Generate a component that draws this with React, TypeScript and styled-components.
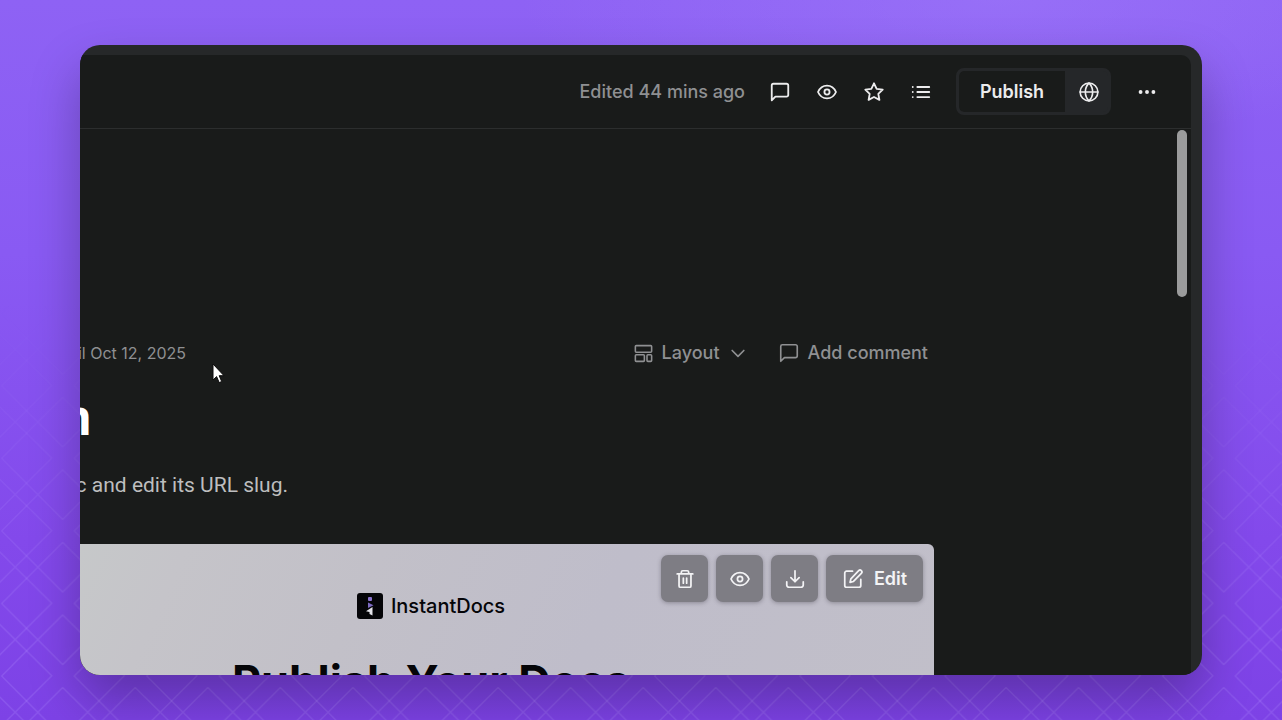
import type { ReactNode } from "react";
import styled, { createGlobalStyle } from "styled-components";

const GlobalStyle = createGlobalStyle`
  *, *::before, *::after { box-sizing: border-box; }
  html, body { margin: 0; padding: 0; }
  body { font-family: Inter, "Liberation Sans", sans-serif; }
  h1, h2, p { margin: 0; }
  button { font: inherit; color: inherit; background: none; border: 0; padding: 0; cursor: pointer; }
`;

const Stage = styled.main`
  position: relative;
  display: flex;
  height: 100vh;
  padding: 45px 80px;
  overflow: hidden;
  background:
    radial-gradient(ellipse 480px 140px at 78% 0, rgba(164, 130, 252, 0.4), transparent),
    linear-gradient(180deg, #8e62f4 0%, #895af3 35%, #8349eb 75%, #7d42e6 100%);
`;

const Lattice = styled.svg`
  position: absolute;
  inset: 0;
  width: 100%;
  height: 100%;
  mask-image: linear-gradient(180deg, transparent 42%, #000 88%);
`;

const Card = styled.section`
  position: relative;
  flex: 1;
  min-width: 0;
  display: flex;
  padding: 10px 11px 0 0;
  border-radius: 20px;
  overflow: hidden;
  background: #262829;
`;

const CardShadow = styled.div`
  position: relative;
  flex: 1;
  min-width: 0;
  display: flex;
  border-radius: 20px;
  box-shadow: 0 25px 50px rgba(0, 0, 0, 0.27);
`;

const Window = styled.div`
  flex: 1;
  min-width: 0;
  display: flex;
  flex-direction: column;
  border-top-right-radius: 10px;
  background: #191b1a;
`;

const Toolbar = styled.header`
  flex: none;
  display: flex;
  align-items: center;
  justify-content: flex-end;
  height: 74px;
  padding-right: 21px;
  border-bottom: 1px solid #2c2e2e;
  color: #ececed;
`;

const Edited = styled.span`
  margin-right: 11px;
  font-size: 18px;
  line-height: 24px;
  font-weight: 500;
  color: #8f9092;
`;

const ToolButton = styled.button`
  display: flex;
  align-items: center;
  justify-content: center;
  width: 47px;
  height: 47px;
`;

const PublishGroup = styled.div`
  display: flex;
  height: 47px;
  margin: 0 12px;
  border: 3px solid #252729;
  border-radius: 8px;
  background: #252729;
  overflow: hidden;
`;

const PublishButton = styled.button`
  width: 106px;
  border-radius: 5px 0 0 5px;
  background: #191b1a;
  font-size: 18px;
  line-height: 24px;
  font-weight: 600;
`;

const GlobeButton = styled.button`
  display: flex;
  align-items: center;
  justify-content: center;
  width: 43px;
  padding-left: 4px;
`;

const Scroller = styled.div`
  position: relative;
  flex: 1;
  min-height: 0;
  display: flex;
  justify-content: flex-end;
  padding-right: 257px;
  overflow: hidden;
`;

const ScrollThumb = styled.div`
  position: absolute;
  top: 1px;
  right: 4px;
  width: 10px;
  height: 167px;
  border-radius: 5px;
  background: #9b9c9c;
`;

const Column = styled.article`
  flex: none;
  display: flex;
  flex-direction: column;
  width: 1006px;
  padding-top: 212px;
`;

const MetaRow = styled.div`
  display: flex;
  align-items: center;
  height: 36px;
  padding-right: 6px;
  color: #8f9092;
`;

const DateText = styled.p`
  width: 258px;
  margin-right: auto;
  text-align: right;
  font-size: 16px;
  line-height: 24px;
`;

const MetaButton = styled.button`
  display: flex;
  align-items: center;
  gap: 8px;
  margin-left: 30px;
  font-size: 18px;
  line-height: 24px;
  font-weight: 500;
`;

const Title = styled.h1`
  width: 164px;
  margin-top: 20px;
  text-align: right;
  font-family: "Open Sans", sans-serif;
  font-size: 48px;
  line-height: 64px;
  font-weight: 700;
  color: #fff;
`;

const Subtitle = styled.p`
  width: 360px;
  margin-top: 20px;
  text-align: right;
  font-family: Roboto, sans-serif;
  font-size: 21px;
  line-height: 32px;
  color: #bdbebf;
`;

const Hero = styled.section`
  position: relative;
  display: flex;
  flex-direction: column;
  align-items: center;
  margin-top: 43px;
  height: 560px;
  padding-top: 48px;
  border-radius: 6px;
  background: linear-gradient(115deg, #c6c8c9 14%, #c5c4c9 24%, #c2c0c8 42%, #bfbdca 65%, #c1bfc9 100%);
  color: #050508;
`;

const Brand = styled.div`
  display: flex;
  align-items: center;
  gap: 8px;
  font-size: 20px;
  line-height: 28px;
  font-weight: 500;
`;

const HeroTitle = styled.h2`
  margin-top: 32px;
  font-size: 45px;
  line-height: 60px;
  font-weight: 700;
`;

const HeroActions = styled.div`
  position: absolute;
  top: 11px;
  right: 11px;
  display: flex;
  gap: 8px;
`;

const HeroButton = styled.button<{ $wide?: boolean }>`
  display: flex;
  align-items: center;
  justify-content: center;
  gap: 10px;
  width: ${(p) => (p.$wide ? 97 : 47)}px;
  height: 47px;
  border-radius: 7px;
  background: #7e7d84;
  box-shadow: 0 1px 4px rgba(40, 38, 50, 0.35);
  color: #f3f3f5;
  font-size: 18px;
  line-height: 24px;
  font-weight: 600;
`;

const Pointer = styled.svg`
  position: absolute;
  left: 132px;
  top: 318px;
`;

type IconProps = { size?: number; weight?: number; children: ReactNode };

const Icon = ({ size = 22, weight = 2, children }: IconProps) => (
  <svg
    width={size}
    height={size}
    viewBox="0 0 24 24"
    fill="none"
    stroke="currentColor"
    strokeWidth={weight}
    strokeLinecap="round"
    strokeLinejoin="round"
    aria-hidden="true"
  >
    {children}
  </svg>
);

const commentPath = <path d="M21 15.2a1.8 1.8 0 0 1-1.8 1.8H7l-4 4V4.8A1.8 1.8 0 0 1 4.8 3h14.4A1.8 1.8 0 0 1 21 4.8z" />;

const eyePath = (
  <>
    <path d="M2.2 12C4.2 7.4 7.600 5 12 5s7.800 2.400 9.800 7c-2 4.600-5.400 7-9.800 7S4.200 16.600 2.200 12z" />
    <circle cx="12" cy="12" r="2.800" />
  </>
);

const App = () => (
  <>
    <GlobalStyle />
    <Stage>
      <Lattice aria-hidden="true">
        <defs>
          <pattern
            id="lattice"
            width="217.7"
            height="217.7"
            patternUnits="userSpaceOnUse"
            patternTransform="scale(0.33333) translate(0 1560)"
          >
            <g fill="none" stroke="#b592ff" strokeOpacity="0.24" strokeWidth="4">
              <path d="M188 -1.700L5 -184.700M188 216L5 33L188 -150M188 284.700L5 467.700M188 67L5 250L188 433" />
              <path d="M188 216L371 33M188 67L371 250M188 -1.700L371 -184.700" />
              <path d="M-29.700 216L155.300 32.300L-29.700 -150.700M-29.700 67L155.300 250L-29.700 433.700" />
            </g>
          </pattern>
        </defs>
        <rect width="100%" height="100%" fill="url(#lattice)" />
      </Lattice>
      <CardShadow>
        <Card>
          <Window>
            <Toolbar>
              <Edited>Edited 44 mins ago</Edited>
              <ToolButton aria-label="Comments">
                <Icon>{commentPath}</Icon>
              </ToolButton>
              <ToolButton aria-label="Preview">
                <Icon>{eyePath}</Icon>
              </ToolButton>
              <ToolButton aria-label="Favourite">
                <Icon>
                  <path d="M12 2.500l2.900 6 6.600.900-4.800 4.600 1.200 6.600-5.900-3.200-5.900 3.200 1.200-6.600L2.500 9.400l6.600-.900z" />
                </Icon>
              </ToolButton>
              <ToolButton aria-label="Outline">
                <Icon>
                  <path d="M8 6.500h13M8 12h13M8 17.500h13M3 6.500h.01M3 12h.01M3 17.500h.01" />
                </Icon>
              </ToolButton>
              <PublishGroup>
                <PublishButton>Publish</PublishButton>
                <GlobeButton aria-label="Public link">
                  <Icon weight={1.8}>
                    <circle cx="12" cy="12" r="9.700" />
                    <path d="M2.300 12h19.400M12 2.300c2.700 2.700 4 6 4 9.700s-1.300 7-4 9.700c-2.700-2.700-4-6-4-9.700s1.300-7 4-9.700z" />
                  </Icon>
                </GlobeButton>
              </PublishGroup>
              <ToolButton aria-label="More">
                <Icon>
                  <g fill="currentColor" stroke="none">
                    <circle cx="5" cy="12" r="2.100" />
                    <circle cx="12" cy="12" r="2.100" />
                    <circle cx="19" cy="12" r="2.100" />
                  </g>
                </Icon>
              </ToolButton>
            </Toolbar>
            <Scroller>
              <Column>
                <MetaRow>
                  <DateText>il Oct 12, 2025</DateText>
                  <MetaButton>
                    <Icon size={21} weight={1.8}>
                      <rect x="2.700" y="3" width="18.600" height="7.500" rx="1" />
                      <rect x="2.700" y="13.500" width="10.300" height="7.500" rx="1" />
                      <rect x="16" y="13.500" width="5.300" height="7.500" rx="1" />
                    </Icon>
                    Layout
                    <Icon size={20}>
                      <path d="M5 9l7 7 7-7" />
                    </Icon>
                  </MetaButton>
                  <MetaButton>
                    <Icon weight={1.8}>{commentPath}</Icon>
                    Add comment
                  </MetaButton>
                </MetaRow>
                <Title>n</Title>
                <Subtitle>c and edit its URL slug.</Subtitle>
                <Hero>
                  <Brand>
                    <svg width="26" height="26" viewBox="0 0 26 26" aria-hidden="true">
                      <rect width="26" height="26" rx="3" fill="#050508" />
                      <rect x="11" y="4" width="4" height="4" rx="1" fill="#8b74cf" />
                      <path d="M11 9.500l5.500 2.700-5.500 2.700z" fill="#7d6bc2" />
                      <path d="M15.500 14v8.500l-3-1.500v-2l-3.500-.700z" fill="#e4e4ea" />
                    </svg>
                    InstantDocs
                  </Brand>
                  <HeroTitle>Publish Your Docs</HeroTitle>
                  <HeroActions>
                    <HeroButton aria-label="Delete">
                      <Icon weight={1.9}>
                        <path d="M3.500 6.500h17M5.500 6.500v13a1.500 1.500 0 0 0 1.500 1.500h10a1.500 1.500 0 0 0 1.500-1.500v-13M8 6.500v-2A1.500 1.500 0 0 1 9.500 3h5A1.500 1.500 0 0 1 16 4.500v2M10.200 11v5.500M13.800 11v5.500" />
                      </Icon>
                    </HeroButton>
                    <HeroButton aria-label="View">
                      <Icon weight={1.9}>{eyePath}</Icon>
                    </HeroButton>
                    <HeroButton aria-label="Download">
                      <Icon weight={1.9}>
                        <path d="M3 15v3.500A2.500 2.500 0 0 0 5.500 21h13a2.500 2.500 0 0 0 2.500-2.500V15M7.500 10.500L12 15l4.500-4.500M12 15V3" />
                      </Icon>
                    </HeroButton>
                    <HeroButton $wide>
                      <Icon weight={1.9}>
                        <path d="M11.500 3.500H5A2 2 0 0 0 3 5.500v13.500a2 2 0 0 0 2 2h13.500a2 2 0 0 0 2-2V12.500" />
                        <path d="M18.200 2.900a2 2 0 0 1 2.900 2.900L12.500 14.700l-3.700.900.900-3.700z" />
                      </Icon>
                      Edit
                    </HeroButton>
                  </HeroActions>
                </Hero>
              </Column>
              <ScrollThumb />
            </Scroller>
          </Window>
          <Pointer width="13" height="21" viewBox="0 0 13 21" aria-hidden="true">
            <path
              d="M1 1v16l3.600-3.400 2.600 6 2.500-1.100-2.500-5.800H12z"
              fill="#fff"
              stroke="#0c0c0c"
              strokeWidth="1"
            />
          </Pointer>
        </Card>
      </CardShadow>
    </Stage>
  </>
);

export default App;
